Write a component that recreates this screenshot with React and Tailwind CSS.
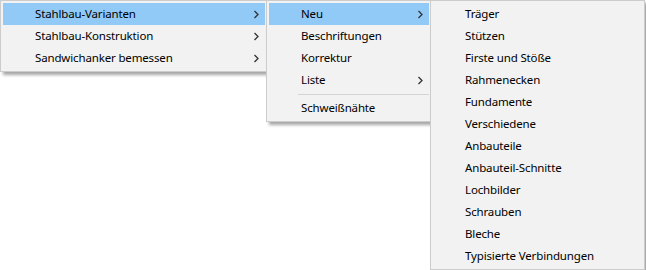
import React from 'react';

const Chevron = () => (
  <svg width="6" height="9" viewBox="0 0 6 9" className="absolute right-[6px] top-[7px]">
    <polyline points="1.5,1 5,4.5 1.5,8" fill="none" stroke="#333" strokeWidth="1.3" />
  </svg>
);

const Item = ({ label, active, sub }) => (
  <div
    className={`relative h-[22px] pl-[32px] pr-[24px] flex items-center text-[11.5px] tracking-[-0.15px] text-black whitespace-nowrap ${
      active ? 'bg-[#91c9f7]' : ''
    }`}
  >
    {label}
    {sub && <Chevron />}
  </div>
);

const Menu = ({ className, children }) => (
  <div
    className={`absolute top-0 bg-[#f2f2f2] border border-[#cccccc] p-[2px] shadow-[3px_3px_3px_rgba(0,0,0,0.35)] ${className}`}
  >
    {children}
  </div>
);

const App = () => {
  const third = [
    'Träger',
    'Stützen',
    'Firste und Stöße',
    'Rahmenecken',
    'Fundamente',
    'Verschiedene',
    'Anbauteile',
    'Anbauteil-Schnitte',
    'Lochbilder',
    'Schrauben',
    'Bleche',
    'Typisierte Verbindungen',
  ];

  return (
    <div
      className="relative w-[646px] h-[270px] bg-white overflow-hidden"
      style={{ fontFamily: '"Segoe UI", "Noto Sans", "Open Sans", sans-serif' }}
    >
      <Menu className="left-0 w-[268px]">
        <Item label="Stahlbau-Varianten" active sub />
        <Item label="Stahlbau-Konstruktion" sub />
        <Item label="Sandwichanker bemessen" sub />
      </Menu>

      <Menu className="left-[266px] w-[166px]">
        <Item label="Neu" active sub />
        <Item label="Beschriftungen" />
        <Item label="Korrektur" />
        <Item label="Liste" sub />
        <div className="h-[6px] flex items-center pl-[29px]">
          <div className="h-px w-full bg-[#d4d4d4]" />
        </div>
        <Item label="Schweißnähte" />
      </Menu>

      <Menu className="left-[430px] w-[215px]">
        {third.map((t) => (
          <Item key={t} label={t} />
        ))}
      </Menu>
    </div>
  );
};

export default App;
